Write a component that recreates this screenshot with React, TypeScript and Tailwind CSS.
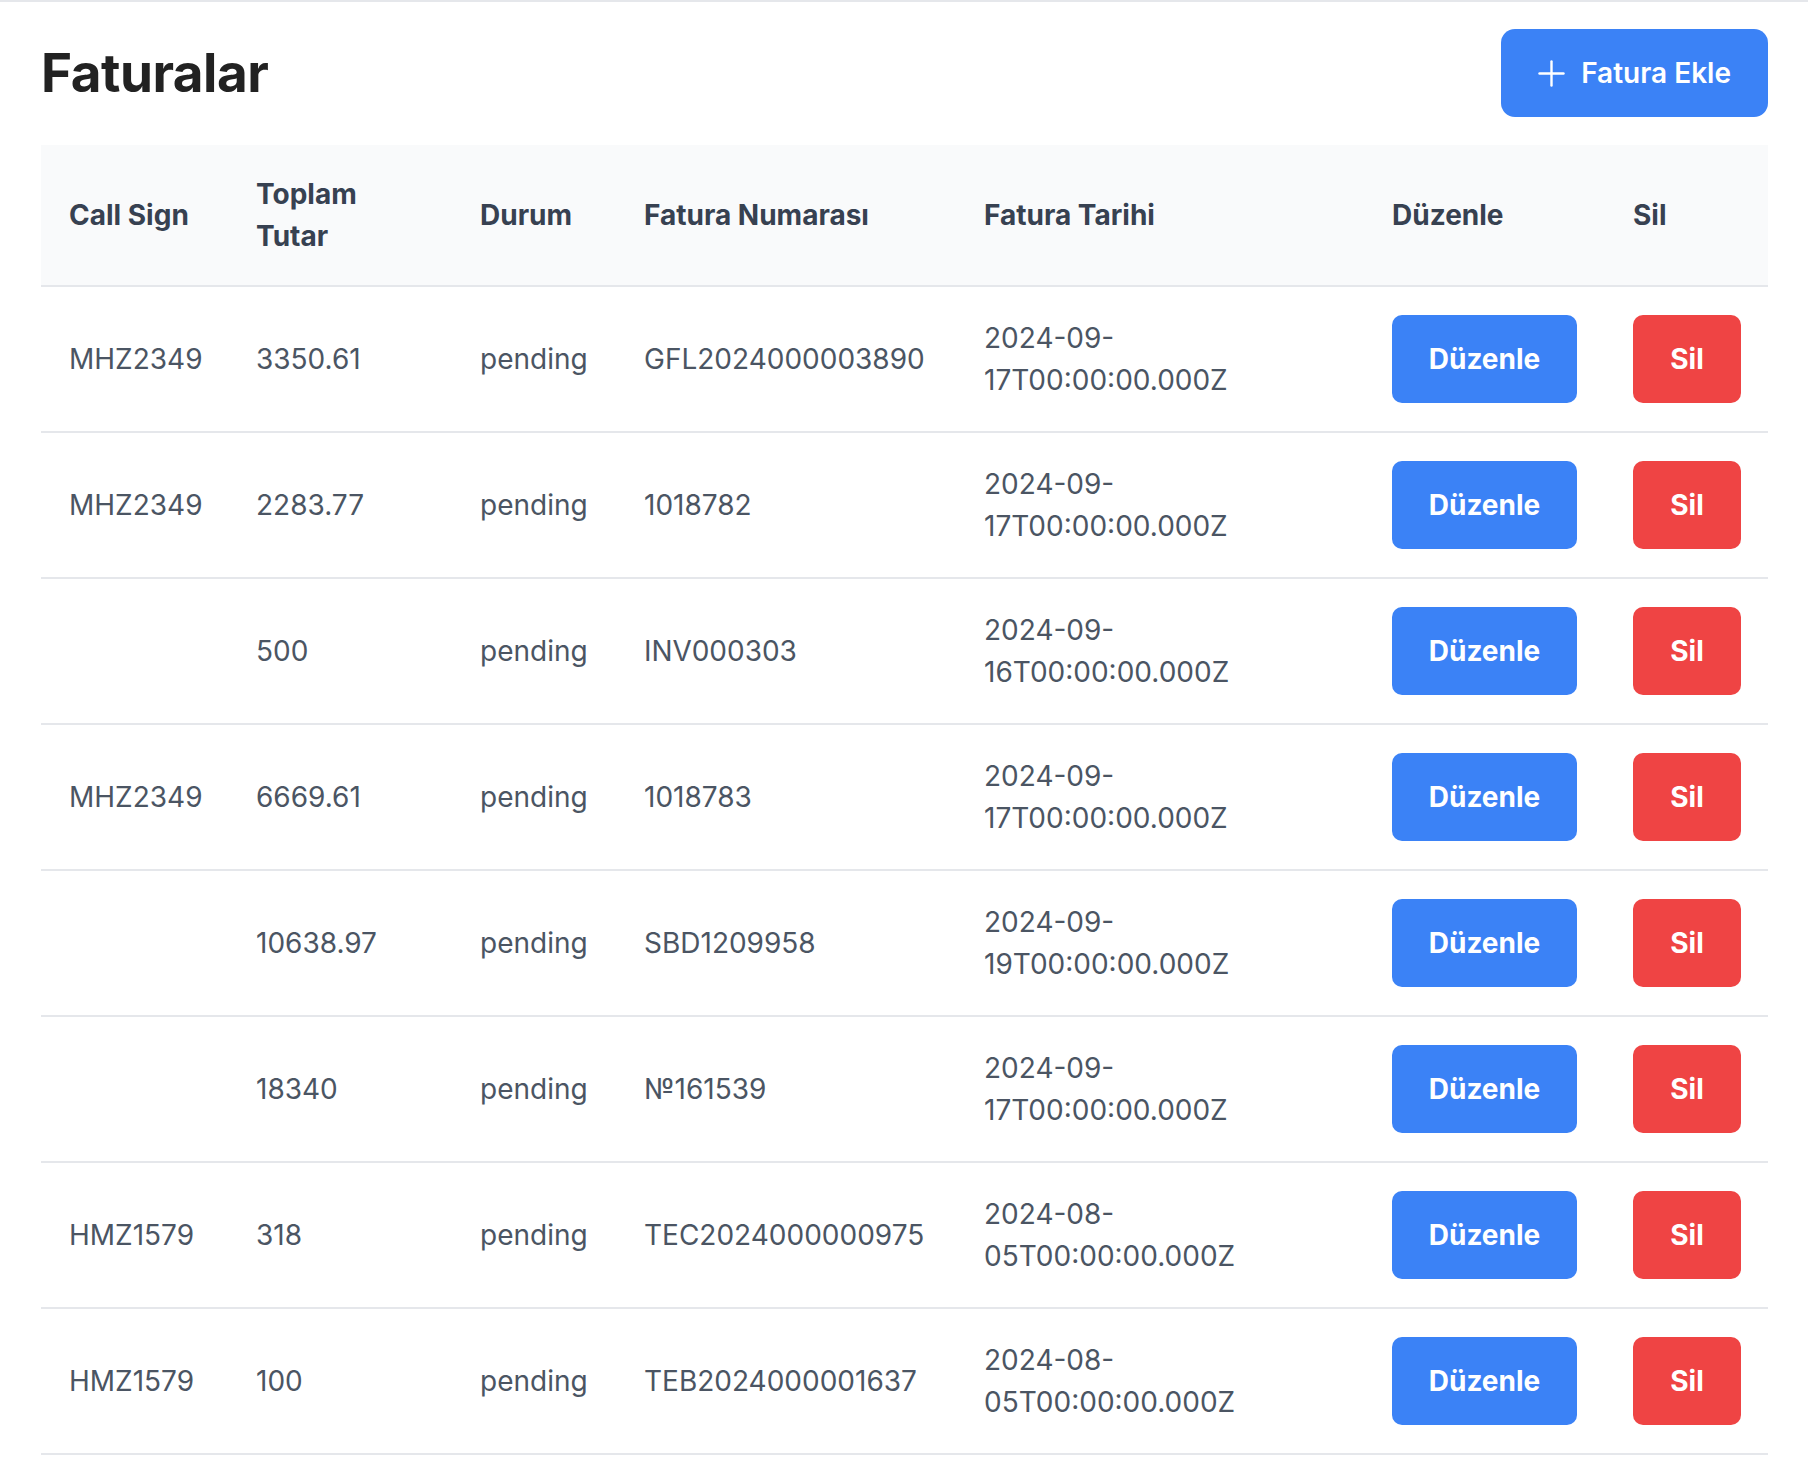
import React from "react";

type Row = { cs: string; total: string; status: string; no: string; date: string };

const rows: Row[] = [
  { cs: "MHZ2349", total: "3350.61", status: "pending", no: "GFL2024000003890", date: "2024-09-17T00:00:00.000Z" },
  { cs: "MHZ2349", total: "2283.77", status: "pending", no: "1018782", date: "2024-09-17T00:00:00.000Z" },
  { cs: "", total: "500", status: "pending", no: "INV000303", date: "2024-09-16T00:00:00.000Z" },
  { cs: "MHZ2349", total: "6669.61", status: "pending", no: "1018783", date: "2024-09-17T00:00:00.000Z" },
  { cs: "", total: "10638.97", status: "pending", no: "SBD1209958", date: "2024-09-19T00:00:00.000Z" },
  { cs: "", total: "18340", status: "pending", no: "№161539", date: "2024-09-17T00:00:00.000Z" },
  { cs: "HMZ1579", total: "318", status: "pending", no: "TEC2024000000975", date: "2024-08-05T00:00:00.000Z" },
  { cs: "HMZ1579", total: "100", status: "pending", no: "TEB2024000001637", date: "2024-08-05T00:00:00.000Z" },
];

export default function App() {
  return (
    <div className="min-h-screen bg-white border-t-2 border-[#e5e7eb] font-['Inter',sans-serif]">
      <div className="pt-[27px] pl-[41px] pr-[40px] pb-[20px]">
        <div className="flex items-center justify-between mb-[28px]">
          <h1 className="text-[53px] leading-none font-bold text-[#222222] tracking-[-0.5px]">Faturalar</h1>
          <button className="h-[88px] px-[37px] rounded-[14px] bg-[#3b82f6] text-white flex items-center gap-[16px] text-[28px] font-semibold">
            <svg width="27" height="27" viewBox="0 0 27 27" fill="none" stroke="currentColor" strokeWidth="2.4" strokeLinecap="round">
              <line x1="13.5" y1="1.5" x2="13.5" y2="25.5" />
              <line x1="1.5" y1="13.5" x2="25.5" y2="13.5" />
            </svg>
            <span>Fatura Ekle</span>
          </button>
        </div>
        <table className="w-full table-fixed border-collapse text-[28px] leading-[42px]">
          <colgroup>
            <col className="w-[187px]" />
            <col className="w-[224px]" />
            <col className="w-[164px]" />
            <col className="w-[340px]" />
            <col className="w-[408px]" />
            <col className="w-[241px]" />
            <col className="w-[163px]" />
          </colgroup>
          <thead>
            <tr className="bg-[#f9fafb] border-b-2 border-[#e5e7eb]">
              {["Call Sign", "Toplam Tutar", "Durum", "Fatura Numarası", "Fatura Tarihi", "Düzenle", "Sil"].map((h) => (
                <th key={h} className="px-[28px] py-[28px] text-left font-bold text-[#374151] align-middle">
                  {h}
                </th>
              ))}
            </tr>
          </thead>
          <tbody>
            {rows.map((r, i) => (
              <tr key={i} className="border-b-2 border-[#e5e7eb] text-[#4b5563]">
                <td className="px-[28px] py-[28px] align-middle">{r.cs}</td>
                <td className="px-[28px] py-[28px] align-middle">{r.total}</td>
                <td className="px-[28px] py-[28px] align-middle">{r.status}</td>
                <td className="px-[28px] py-[28px] align-middle">{r.no}</td>
                <td className="px-[28px] py-[28px] align-middle">{r.date}</td>
                <td className="px-[28px] py-[28px] align-middle">
                  <button className="w-[185px] h-[88px] rounded-[10px] bg-[#3b82f6] text-white font-bold">Düzenle</button>
                </td>
                <td className="px-[28px] py-[28px] align-middle">
                  <button className="w-[108px] h-[88px] rounded-[10px] bg-[#ef4444] text-white font-bold">Sil</button>
                </td>
              </tr>
            ))}
          </tbody>
        </table>
      </div>
    </div>
  );
}
